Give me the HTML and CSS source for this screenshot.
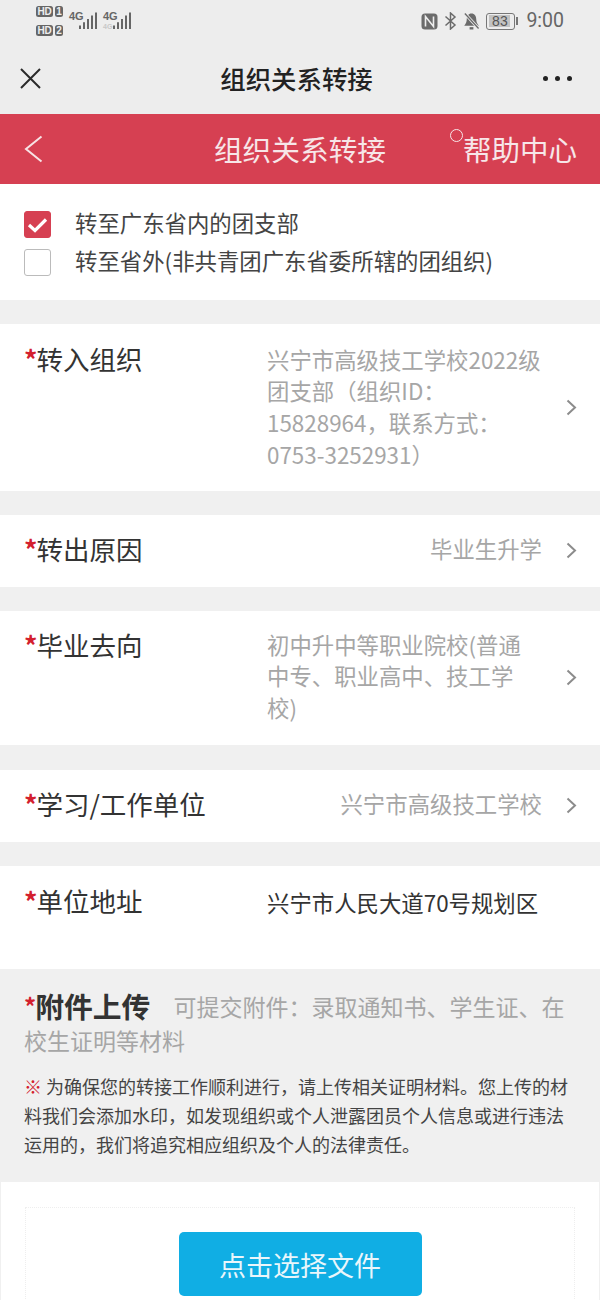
FILE: index.html
```html
<!DOCTYPE html>
<html lang="zh-CN">
<head>
<meta charset="utf-8">
<title>组织关系转接</title>
<link rel="stylesheet" href="styles.css">
</head>
<body>
<div class="phone">
  <div class="status">
    <div class="status-left">
      <div class="sims">
        <div class="sim"><span class="hd">HD</span><span class="simn">1</span></div>
        <div class="sim"><span class="hd">HD</span><span class="simn">2</span></div>
      </div>
      <div class="signal"><div class="net"><span>4G</span></div><svg width="18" height="17" viewBox="0 0 18 17"><path d="M1 13.500V17M5 10.200V17M9 6.900V17M13 3.600V17M17 .5V17" class="bars"/></svg></div>
      <div class="signal"><div class="net"><span>4G</span><span class="net-sub">4G</span></div><svg width="18" height="17" viewBox="0 0 18 17"><path d="M1 13.500V17M5 10.200V17M9 6.900V17M13 3.600V17M17 .5V17" class="bars"/></svg></div>
    </div>
    <div class="status-right">
      <svg class="sicon" width="17" height="17" viewBox="0 0 17 17"><rect width="16" height="16" x=".5" y=".5" rx="3.500" fill="#6b6b6b"/><path d="M4.500 13.500V3.500l8 10v-10" fill="none" stroke="#ededed" stroke-width="1.600"/></svg>
      <svg class="sicon" width="13" height="18" viewBox="0 0 13 18"><path d="M1.500 4.500l9.500 8.500-4.500 4V1L11 5 1.500 13.500" fill="none" stroke="#6b6b6b" stroke-width="1.500"/></svg>
      <svg class="sicon" width="17" height="18" viewBox="0 0 18 18"><path d="M9 1c-3.300 0-5 2.700-5 5.800 0 3-1 5.200-2.700 7.200h15.400c-1.700-2-2.700-4.200-2.700-7.200C14 3.700 12.300 1 9 1z" fill="#6b6b6b"/><path d="M7 15.500h4V18H7z" fill="#6b6b6b"/><path d="M2 1l14.500 16" stroke="#ededed" stroke-width="3.200"/><path d="M2 1l14.500 16" stroke="#6b6b6b" stroke-width="1.400"/></svg>
      <div class="battery"><span class="batt-body"><span class="batt-fill"></span><span class="batt-num">83</span></span><span class="batt-tip"></span></div>
      <span class="time">9:00</span>
    </div>
  </div>
  <div class="nav">
    <svg class="nav-close" width="21" height="21" viewBox="0 0 21 21"><path d="M1 1l19 19M20 1L1 20" stroke="#2a2a2a" stroke-width="2" fill="none"/></svg>
    <h1 class="nav-title">组织关系转接</h1>
    <div class="nav-more"><i></i><i></i><i></i></div>
  </div>
  <div class="banner">
    <svg class="back" width="19" height="28" viewBox="0 0 19 28"><path d="M17.500 1.500L2 14l15.500 12.500" fill="none" stroke="#f7e3e5" stroke-width="2"/></svg>
    <span class="banner-title">组织关系转接</span>
    <span class="help"><i class="help-dot"></i>帮助中心</span>
  </div>

  <section class="card choices">
    <div class="choice"><span class="box on"><svg width="21" height="16" viewBox="0 0 21 16"><path d="M2 8l6 5.500L19 2.500" fill="none" stroke="#fff" stroke-width="3.200"/></svg></span><span>转至广东省内的团支部</span></div>
    <div class="choice"><span class="box"></span><span>转至省外(非共青团广东省委所辖的团组织)</span></div>
  </section>

  <section class="card row row-org">
    <div class="label"><b>*</b>转入组织</div>
    <div class="value">兴宁市高级技工学校2022级团支部（组织ID：15828964，联系方式：0753-3252931）</div>
    <svg class="chev" width="11" height="17" viewBox="0 0 11 17"><path d="M1.500 1.500l7.500 7-7.500 7" fill="none" stroke="#8c8c8c" stroke-width="2"/></svg>
  </section>

  <section class="card row row-short">
    <div class="label"><b>*</b>转出原因</div>
    <div class="value right">毕业生升学</div>
    <svg class="chev" width="11" height="17" viewBox="0 0 11 17"><path d="M1.500 1.500l7.500 7-7.500 7" fill="none" stroke="#8c8c8c" stroke-width="2"/></svg>
  </section>

  <section class="card row row-dest">
    <div class="label"><b>*</b>毕业去向</div>
    <div class="value">初中升中等职业院校(普通中专、职业高中、技工学校)</div>
    <svg class="chev" width="11" height="17" viewBox="0 0 11 17"><path d="M1.500 1.500l7.500 7-7.500 7" fill="none" stroke="#8c8c8c" stroke-width="2"/></svg>
  </section>

  <section class="card row row-short">
    <div class="label"><b>*</b>学习/工作单位</div>
    <div class="value right">兴宁市高级技工学校</div>
    <svg class="chev" width="11" height="17" viewBox="0 0 11 17"><path d="M1.500 1.500l7.500 7-7.500 7" fill="none" stroke="#8c8c8c" stroke-width="2"/></svg>
  </section>

  <section class="card row row-addr">
    <div class="label"><b>*</b>单位地址</div>
    <div class="value dark">兴宁市人民大道70号规划区</div>
  </section>

  <section class="attach">
    <p class="attach-head"><b class="star">*</b><strong>附件上传</strong><span class="hint">可提交附件：录取通知书、学生证、在校生证明等材料</span></p>
    <p class="notice"><em>※</em> 为确保您的转接工作顺利进行，请上传相关证明材料。您上传的材料我们会添加水印，如发现组织或个人泄露团员个人信息或进行违法运用的，我们将追究相应组织及个人的法律责任。</p>
  </section>

  <section class="upload">
    <div class="upload-inner">
      <button class="pick" type="button">点击选择文件</button>
    </div>
  </section>
</div>
</body>
</html>
```
FILE: styles.css
```css
* { box-sizing: border-box; }
html, body { margin: 0; padding: 0; }
body { width: 600px; height: 1300px; overflow: hidden; background: #f0f0f0; font-family: "Noto Sans CJK SC", "Noto Sans", sans-serif; color: #333; }
.phone { width: 600px; height: 1300px; overflow: hidden; background: #f0f0f0; display: flex; flex-direction: column; }

.status { height: 42px; background: #ededed; display: flex; justify-content: space-between; padding: 3px 36px 0 36px; flex: none; }
.status-left { display: flex; gap: 6px; align-items: flex-start; }
.sims { display: flex; flex-direction: column; gap: 8px; padding-top: 3px; }
.sim { display: flex; gap: 2px; height: 11px; }
.hd, .simn { background: #666; color: #eee; font: 700 10px/11px "Liberation Sans", sans-serif; border-radius: 2.500px; height: 11px; text-align: center; letter-spacing: -.3px; }
.hd { width: 17px; }
.simn { width: 8px; }
.signal { display: flex; align-items: flex-start; padding-top: 9px; }
.net { display: flex; flex-direction: column; width: 10px; gap: 4px; font: 700 11px/8px "Liberation Sans Narrow", "Liberation Sans", sans-serif; color: #666; }
.net-sub { font-size: 7px; line-height: 5px; color: #c8c8c8; }
.bars { stroke: #666; stroke-width: 2; fill: none; }
.status-right { display: flex; align-items: center; height: 36px; gap: 6px; }
.sicon { flex: none; }
.battery { display: flex; align-items: center; gap: 1px; }
.batt-body { position: relative; width: 29px; height: 17px; border: 1.500px solid #777; border-radius: 3px; display: block; }
.batt-fill { position: absolute; left: 1.500px; top: 1.500px; bottom: 1.500px; width: 21px; background: #c2c2c2; }
.batt-num { position: absolute; left: 0; right: 2px; top: 0; text-align: center; font: 400 14px/14px "Liberation Sans", sans-serif; color: #555; }
.batt-tip { width: 2px; height: 8px; background: #777; }
.time { font: 400 19.500px/20px Roboto, "Liberation Sans", sans-serif; color: #666; margin-left: 2px; }

.nav { height: 72px; background: #ededed; display: flex; align-items: center; justify-content: space-between; padding: 0 28px 0 20px; flex: none; }
.nav-title { margin: 0 0 0 9px; font-size: 25.400px; font-weight: 500; color: #222; line-height: 32px; }
.nav-more { display: flex; gap: 7px; width: 29px; }
.nav-more i { width: 5px; height: 5px; border-radius: 50%; background: #222; display: block; flex: none; }

.banner { height: 70px; background: #d64052; display: flex; align-items: center; position: relative; padding: 0 23px 0 24px; flex: none; color: #f7e6e8; }
.banner-title { font-size: 28.700px; position: absolute; left: 0; right: 0; text-align: center; line-height: 36px; }
.help { margin-left: auto; font-size: 28.500px; line-height: 36px; position: relative; }
.help-dot { position: absolute; left: -13px; top: -2px; width: 13px; height: 13px; border: 1.300px solid #f7e6e8; border-radius: 50%; }

.card { background: #fff; flex: none; }
.choices { height: 116px; padding: 24px 25px 0 24px; margin-bottom: 24px; display: flex; flex-direction: column; gap: 9px; }
.choice { display: flex; align-items: flex-start; gap: 24px; font-size: 22.400px; line-height: 29px; color: #444; height: 29px; }
.box { width: 27px; height: 27px; margin-top: 3px; border: 1px solid #bbb; border-radius: 3px; flex: none; background: #fff; display: flex; align-items: center; justify-content: center; }
.box.on { background: #d64052; border-color: #d64052; }

.row { display: flex; padding: 0 22px 0 24px; margin-bottom: 24px; position: relative; }
.row-org { height: 167px; padding-top: 15px; align-items: flex-start; }
.row-short { height: 72px; align-items: center; padding-bottom: 4px; }
.row-dest { height: 134px; padding-top: 14px; align-items: flex-start; margin-bottom: 25px; }
.row-addr { height: 103px; margin-bottom: 0; padding-top: 15px; align-items: flex-start; }
.label { flex: none; width: 243px; font-size: 26.500px; line-height: 40px; color: #333; white-space: nowrap; }
.label b { color: #d3202e; font-weight: 700; letter-spacing: -1px; }
.value { width: 275px; font-size: 22.400px; line-height: 31.700px; color: #a6a6a6; }
.value.right { flex: 1; text-align: right; padding-right: 36px; }
.value.dark { color: #333; }
.row-org .value { padding-top: 4.500px; }
.row-dest .value { padding-top: 3.500px; }
.row-addr .value { padding-top: 5.500px; }
.chev { position: absolute; right: 23px; top: 50%; margin-top: -9px; }

.attach { height: 213px; padding: 20px 24px 0 24px; background: #f0f0f0; flex: none; }
.attach-head { margin: 0; line-height: 34px; font-size: 23px; color: #a6a6a6; }
.star { color: #d3202e; font-size: 24px; line-height: 1; letter-spacing: -1px; }
.attach-head strong { font-size: 28.800px; line-height: 1; color: #333; margin-right: 23px; vertical-align: -2px; }
.notice { margin: 15px 0 0; font-size: 18px; line-height: 29px; color: #444; }
.notice em { color: #d3202e; font-style: normal; }

.upload { flex: 1; background: #fff; margin: 0 1px; padding: 25px 24px 0; }
.upload-inner { border: 1px dotted #eee; height: 200px; padding-top: 24px; display: flex; justify-content: center; align-items: flex-start; }
.pick { width: 243px; height: 64px; background: #10aee4; border: none; border-radius: 5px; color: #eaf6fb; font-family: inherit; font-size: 27px; }
```
